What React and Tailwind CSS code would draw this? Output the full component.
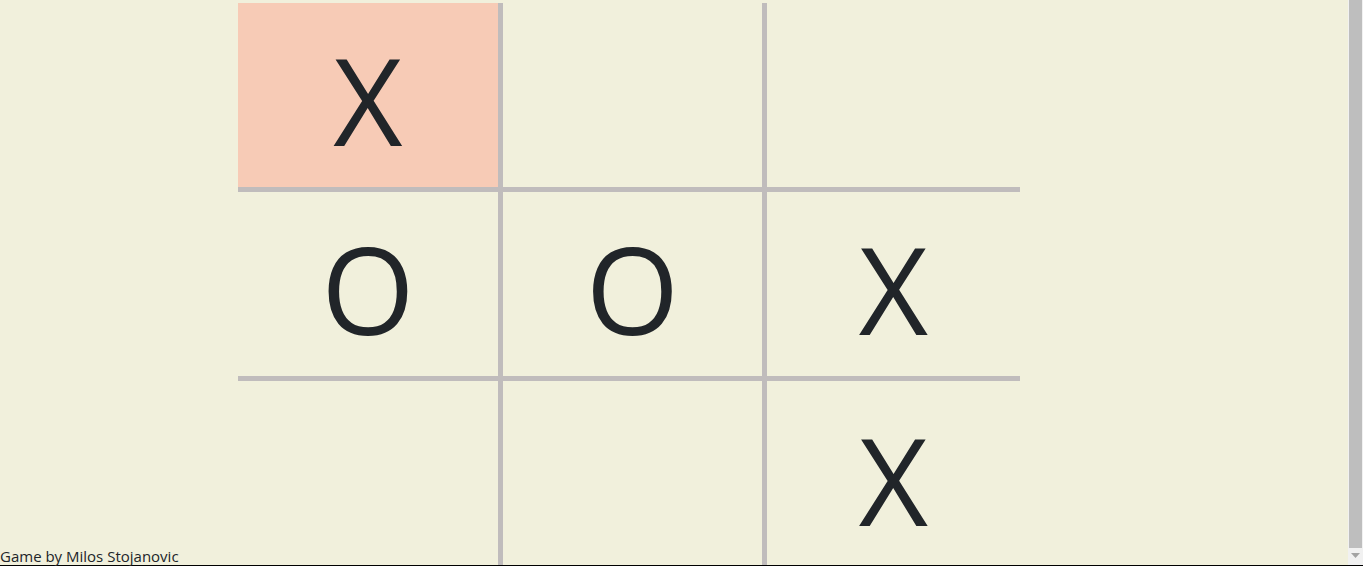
const board = ['X', '', '', 'O', 'O', 'X', '', '', 'X'];

const App = () => {
    return (
        <div className="relative h-[566px] overflow-hidden bg-[#f1f0dc] text-[#212529] font-['Open_Sans',sans-serif]">
            <div className="pt-[3px] pl-[238px]">
                <div className="grid grid-cols-[265px_264px_253px] grid-rows-[189px_189px_189px] w-[782px]">
                    {board.map((v, i) => {
                        const col = i % 3;
                        const row = Math.floor(i / 3);
                        return (
                            <div
                                key={i}
                                className={[
                                    'flex items-center justify-center border-[#c0bcbc] pt-[9px]',
                                    col < 2 ? 'border-r-[5px]' : '',
                                    row < 2 ? 'border-b-[5px]' : '',
                                    i === 0 ? 'bg-[#f7cbb6]' : '',
                                ].join(' ')}
                            >
                                <span className="text-[120px] leading-none">{v}</span>
                            </div>
                        );
                    })}
                </div>
            </div>
            <footer className="absolute bottom-0 left-0 w-full border-b border-black text-[15px] leading-[18px]">
                Game by Milos Stojanovic
            </footer>
            {/* scrollbar look-alike */}
            <div className="absolute top-0 right-0 h-[565px] w-[15px] bg-[#f1f1f1] flex flex-col items-center">
                <div className="shrink-0 w-[13px] h-[548px] bg-[#bebebe]"></div>
                <svg width="9" height="6" viewBox="0 0 9 6" className="mt-[5px]">
                    <path d="M0 0H9L4.5 5Z" fill="#a3a3a3" />
                </svg>
            </div>
        </div>
    );
};

export default App;
